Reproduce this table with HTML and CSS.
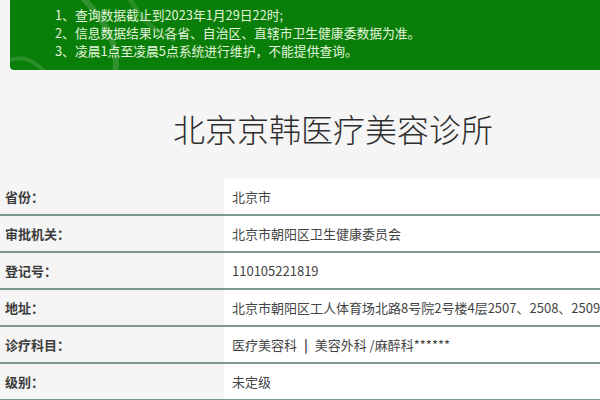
FILE: index.html
```html
<!DOCTYPE html>
<html lang="zh-CN">
<head>
<meta charset="utf-8">
<title>北京京韩医疗美容诊所</title>
<link rel="stylesheet" href="styles.css">
</head>
<body>
<div class="notice">
  <svg class="leaf" width="600" height="70" viewBox="0 0 600 70" aria-hidden="true">
    <path d="M70 -5 C95 20 110 45 105 72" fill="none" stroke="#ffffff" stroke-width="6" opacity="0.16"/>
    <path d="M118 -5 C128 15 140 30 165 40" fill="none" stroke="#ffffff" stroke-width="5" opacity="0.13"/>
    <path d="M0 60 C15 55 25 62 35 72" fill="none" stroke="#ffffff" stroke-width="4" opacity="0.13"/>
  </svg>
  <p class="notice-line">1、查询数据截止到2023年1月29日22时;</p>
  <p class="notice-line">2、信息数据结果以各省、自治区、直辖市卫生健康委数据为准。</p>
  <p class="notice-line">3、凌晨1点至凌晨5点系统进行维护，不能提供查询。</p>
</div>
<div class="title-wrap">
  <h1 class="title">北京京韩医疗美容诊所</h1>
</div>
<div class="table">
  <div class="row"><div class="label">省份：</div><div class="value">北京市</div></div>
  <div class="row"><div class="label">审批机关：</div><div class="value">北京市朝阳区卫生健康委员会</div></div>
  <div class="row"><div class="label">登记号：</div><div class="value">110105221819</div></div>
  <div class="row"><div class="label">地址：</div><div class="value">北京市朝阳区工人体育场北路8号院2号楼4层2507、2508、2509</div></div>
  <div class="row"><div class="label">诊疗科目：</div><div class="value">医疗美容科 <span class="sep">|</span> 美容外科 /麻醉科******</div></div>
  <div class="row"><div class="label">级别：</div><div class="value">未定级</div></div>
</div>
</body>
</html>
```
FILE: styles.css
```css
html, body {
  margin: 0;
  padding: 0;
}
body {
  background: #f5f5f5;
  font-family: "Noto Sans CJK SC", "Noto Sans", sans-serif;
  color: #333;
  width: 600px;
  height: 400px;
  overflow: hidden;
}
.notice {
  position: relative;
  margin-left: 10px;
  height: 70px;
  box-sizing: border-box;
  padding: 6px 0 10px 45px;
  background: #097f09;
  border-radius: 0 0 0 4px;
  overflow: hidden;
}
.leaf {
  position: absolute;
  left: 0;
  top: 0;
}
.notice-line {
  position: relative;
  margin: 0;
  font-size: 12.8px;
  line-height: 18px;
  color: #e4f4dc;
  white-space: nowrap;
}
.title-wrap {
  margin: 0 0 0 10px;
  height: 90px;
  border-bottom: 1px solid #f0f0f0;
  box-sizing: border-box;
  padding-top: 38px;
}
.title {
  margin: 0;
  padding-left: 163px;
  font-size: 32px;
  line-height: 40px;
  font-weight: 300;
  color: #2e2e2e;
  white-space: nowrap;
}
.table {
  margin-top: 19px;
}
.row {
  display: grid;
  grid-template-columns: 224px 1fr;
  height: 37px;
  box-sizing: border-box;
  border-bottom: 2px solid #7c9888;
}
.label {
  padding-left: 5px;
  font-size: 13px;
  font-weight: 700;
  line-height: 35px;
  color: #3c3c3c;
  white-space: nowrap;
}
.value {
  background: #fff;
  padding-left: 8px;
  font-size: 13px;
  line-height: 35px;
  color: #444;
  white-space: nowrap;
  overflow: hidden;
}
.sep {
  font-weight: 700;
  padding: 0 4px;
}
```
